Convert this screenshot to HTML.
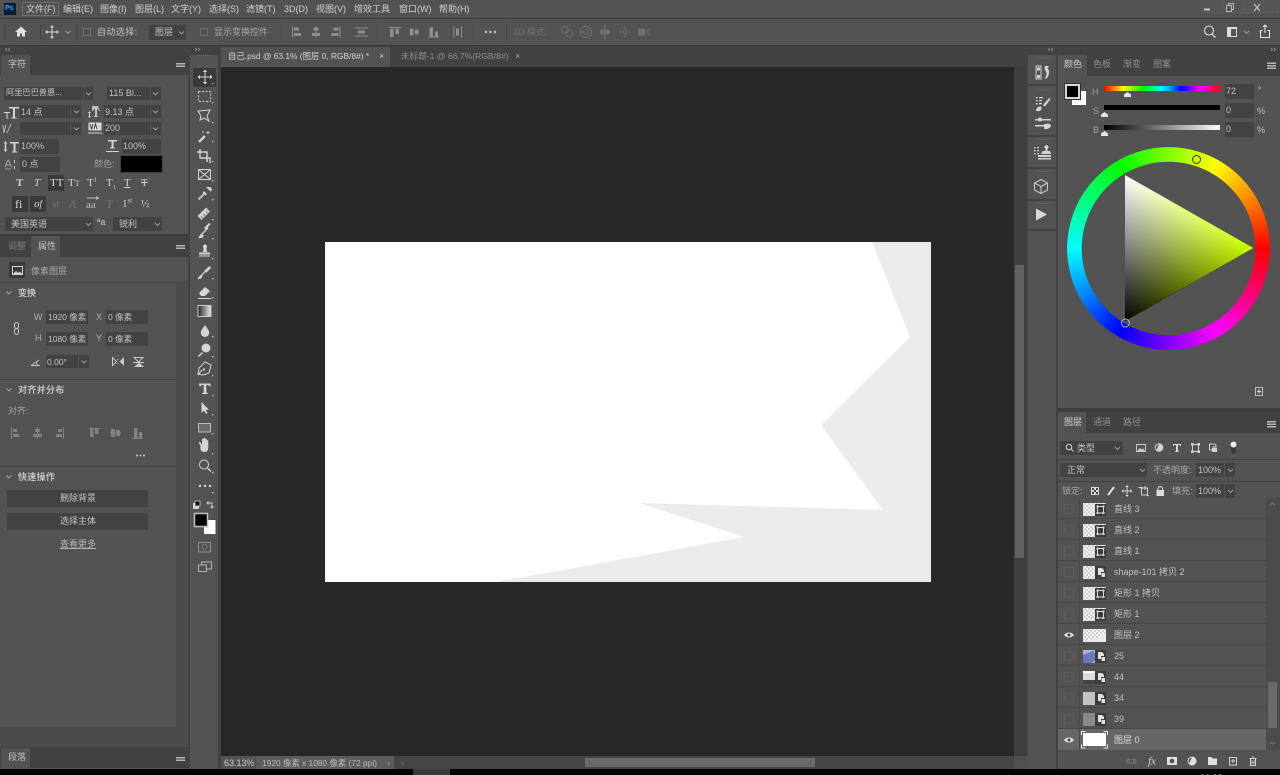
<!DOCTYPE html>
<html lang="zh"><head><meta charset="utf-8"><title>Photoshop</title>
<style>
html,body{margin:0;padding:0;background:#000}
#a{position:relative;width:1280px;height:775px;overflow:hidden;background:#535353;font-family:"Liberation Sans","Noto Sans CJK SC",sans-serif;filter:blur(.3px)}
#a div{position:absolute}
.t{white-space:nowrap;font-size:9px;line-height:12px;color:#c2c2c2}
.d{color:#8a8a8a}
.f{background:#434343}
.h{background:#424242}
.l{background:#3a3a3a}
.r{left:1058px;width:208px;height:20px;border-bottom:1px solid #474747}
.c{left:1064px;width:8px;height:8px;border:1px solid #5c5c5c}
.n{left:1114px;font-size:9px;line-height:12px;color:#c2c2c2;white-space:nowrap}
svg{position:absolute;left:0;top:0}
</style></head><body><div id="a">

<!-- bars -->
<div class="l" style="left:0;top:18px;width:1280px;height:1px"></div>
<div class="l" style="left:0;top:45px;width:1280px;height:1px"></div>
<div class="h" style="left:0;top:46px;width:1280px;height:9px"></div>

<!-- menu -->
<div style="left:4px;top:3px;width:12px;height:12px;background:#001e36"></div>
<div class="t" style="left:5px;top:3px;font-size:7px;font-weight:bold;color:#31a8ff">Ps</div>
<div style="left:22px;top:2px;width:35px;height:12px;border:1px solid #6e6e6e"></div>
<div class="t" style="left:26px;top:3px;color:#d0d0d0">文件(F)</div>
<div class="t" style="left:63px;top:3px;color:#d0d0d0">编辑(E)</div>
<div class="t" style="left:100px;top:3px;color:#d0d0d0">图像(I)</div>
<div class="t" style="left:135px;top:3px;color:#d0d0d0">图层(L)</div>
<div class="t" style="left:171px;top:3px;color:#d0d0d0">文字(Y)</div>
<div class="t" style="left:209px;top:3px;color:#d0d0d0">选择(S)</div>
<div class="t" style="left:246px;top:3px;color:#d0d0d0">滤镜(T)</div>
<div class="t" style="left:284px;top:3px;color:#d0d0d0">3D(D)</div>
<div class="t" style="left:316px;top:3px;color:#d0d0d0">视图(V)</div>
<div class="t" style="left:354px;top:3px;color:#d0d0d0">增效工具</div>
<div class="t" style="left:399px;top:3px;color:#d0d0d0">窗口(W)</div>
<div class="t" style="left:439px;top:3px;color:#d0d0d0">帮助(H)</div>
<div style="left:1201px;top:0;width:78px;height:13px;background:#565656;border:1px solid #5e5e5e;border-top:0;box-sizing:border-box"></div>

<!-- options -->
<div class="t" style="left:97px;top:26px;letter-spacing:.4px">自动选择:</div>
<div class="f" style="left:149px;top:25px;width:37px;height:15px"></div>
<div class="t" style="left:155px;top:26px">图层</div>
<div class="t" style="left:214px;top:26px;color:#a8a8a8">显示变换控件</div>
<div class="t d" style="left:513px;top:26px;color:#717171">3D 模式:</div>

<!-- left panel -->
<div class="h" style="left:0;top:54px;width:188px;height:21px"></div>
<div style="left:1px;top:55px;width:29px;height:20px;background:#535353"></div>
<div class="t" style="left:8px;top:58px">字符</div>

<div class="f" style="left:4px;top:87px;width:79px;height:13px"></div>
<div class="f" style="left:84px;top:87px;width:9px;height:13px"></div>
<div class="t" style="left:6px;top:87px;font-size:8.2px">阿里巴巴普惠...</div>
<div class="f" style="left:107px;top:87px;width:43px;height:13px"></div>
<div class="f" style="left:151px;top:87px;width:10px;height:13px"></div>
<div class="t" style="left:109px;top:87px">115 Bl...</div>

<div class="f" style="left:20px;top:105px;width:50px;height:13px"></div>
<div class="f" style="left:71px;top:105px;width:10px;height:13px"></div>
<div class="t" style="left:21px;top:106px">14 点</div>
<div class="f" style="left:104px;top:105px;width:46px;height:13px"></div>
<div class="f" style="left:151px;top:105px;width:10px;height:13px"></div>
<div class="t" style="left:105px;top:106px">9.13 点</div>

<div class="f" style="left:20px;top:122px;width:50px;height:13px"></div>
<div class="f" style="left:71px;top:122px;width:10px;height:13px"></div>
<div class="f" style="left:104px;top:122px;width:46px;height:13px"></div>
<div class="f" style="left:151px;top:122px;width:10px;height:13px"></div>
<div class="t" style="left:105px;top:122px">200</div>

<div class="f" style="left:20px;top:139px;width:39px;height:15px"></div>
<div class="t" style="left:21px;top:140px">100%</div>
<div class="f" style="left:122px;top:139px;width:39px;height:15px"></div>
<div class="t" style="left:123px;top:140px">100%</div>

<div class="f" style="left:20px;top:157px;width:40px;height:15px"></div>
<div class="t" style="left:22px;top:158px">0 点</div>
<div class="t" style="left:94px;top:158px;color:#9c9c9c">颜色:</div>
<div style="left:121px;top:156px;width:41px;height:16px;background:#000;outline:1px solid #424242"></div>

<div class="l" style="left:48px;top:175px;width:16px;height:16px"></div>
<div class="l" style="left:12px;top:196px;width:16px;height:16px"></div>
<div class="l" style="left:30px;top:196px;width:16px;height:16px"></div>
<div class="t" style="left:16px;top:177px;font:bold 11px/13px 'Liberation Serif';color:#cfcfcf">T</div>
<div class="t" style="left:34px;top:177px;font:italic 11px/13px 'Liberation Serif';color:#cfcfcf">T</div>
<div class="t" style="left:50px;top:177px;font:11px/13px 'Liberation Serif';color:#dcdcdc">TT</div>
<div class="t" style="left:68px;top:177px;font:11px/13px 'Liberation Serif';color:#cfcfcf">T<span style="font-size:8px">T</span></div>
<div class="t" style="left:87px;top:177px;font:11px/13px 'Liberation Serif';color:#cfcfcf">T<sup style="font-size:6px;line-height:0">1</sup></div>
<div class="t" style="left:106px;top:177px;font:11px/13px 'Liberation Serif';color:#cfcfcf">T<sub style="font-size:6px;line-height:0">1</sub></div>
<div class="t" style="left:124px;top:177px;font:11px/13px 'Liberation Serif';color:#cfcfcf;text-decoration:underline">T</div>
<div class="t" style="left:141px;top:177px;font:11px/13px 'Liberation Serif';color:#cfcfcf;text-decoration:line-through">T</div>

<div class="t" style="left:15px;top:197px;font:12px/14px 'Liberation Serif';color:#dcdcdc">fi</div>
<div class="t" style="left:34px;top:197px;font:italic 11px/14px 'Liberation Serif';color:#dcdcdc">o<span style="font-size:9px">f</span></div>
<div class="t" style="left:52px;top:197px;font:11px/14px 'Liberation Serif';color:#777">st</div>
<div class="t" style="left:69px;top:197px;font:italic 12px/14px 'Liberation Serif';color:#777">A</div>
<div class="t" style="left:86px;top:198px;font:11px/14px 'Liberation Serif';color:#bdbdbd">aa</div>
<div class="t" style="left:106px;top:197px;font:italic 12px/14px 'Liberation Serif';color:#777">T</div>
<div class="t" style="left:122px;top:197px;font:11px/14px 'Liberation Serif';color:#cfcfcf">1<sup style="font-size:7px;line-height:0">st</sup></div>
<div class="t" style="left:141px;top:197px;font:11px/14px 'Liberation Serif';color:#cfcfcf">½</div>

<div class="f" style="left:5px;top:217px;width:88px;height:14px"></div>
<div class="t" style="left:11px;top:218px">美国英语</div>
<div class="t" style="left:97px;top:216px;font-size:9px">ªa</div>
<div class="f" style="left:113px;top:217px;width:49px;height:14px"></div>
<div class="t" style="left:119px;top:218px">锐利</div>

<div class="l" style="left:0;top:234px;width:188px;height:2px"></div>
<div class="h" style="left:0;top:236px;width:188px;height:21px"></div>
<div style="left:31px;top:236px;width:29px;height:21px;background:#535353"></div>
<div class="t d" style="left:8px;top:240px;color:#7e7e7e">调整</div>
<div class="t" style="left:38px;top:240px">属性</div>
<div class="l" style="left:9px;top:262px;width:16px;height:16px"></div>
<div class="t" style="left:31px;top:265px;color:#a8a8a8">像素图层</div>

<div class="l" style="left:0;top:282px;width:188px;height:1px;background:#474747"></div>
<div style="left:176px;top:283px;width:12px;height:444px;background:#4b4b4b"></div>
<div class="t" style="left:18px;top:287px;font-weight:bold">变换</div>

<div class="t" style="left:34px;top:311px;color:#b0b0b0">W</div>
<div class="f" style="left:46px;top:310px;width:42px;height:14px"></div>
<div class="t" style="left:48px;top:311px;font-size:8.5px">1920 像素</div>
<div class="t" style="left:96px;top:311px;color:#b0b0b0">X</div>
<div class="f" style="left:106px;top:310px;width:42px;height:14px"></div>
<div class="t" style="left:108px;top:311px;font-size:8.5px">0 像素</div>
<div class="t" style="left:35px;top:332px;color:#b0b0b0">H</div>
<div class="f" style="left:46px;top:332px;width:42px;height:14px"></div>
<div class="t" style="left:48px;top:333px;font-size:8.5px">1080 像素</div>
<div class="t" style="left:96px;top:332px;color:#b0b0b0">Y</div>
<div class="f" style="left:106px;top:332px;width:42px;height:14px"></div>
<div class="t" style="left:108px;top:333px;font-size:8.5px">0 像素</div>
<div class="f" style="left:46px;top:355px;width:32px;height:13px"></div>
<div class="f" style="left:79px;top:355px;width:10px;height:13px"></div>
<div class="t" style="left:47px;top:356px;font-size:8.5px">0.00°</div>

<div style="left:0;top:379px;width:176px;height:1px;background:#444"></div>
<div class="t" style="left:18px;top:384px;font-weight:bold;letter-spacing:.3px">对齐并分布</div>
<div class="t" style="left:8px;top:405px;color:#a4a4a4">对齐:</div>
<div style="left:0;top:466px;width:176px;height:1px;background:#444"></div>
<div class="t" style="left:18px;top:471px;font-weight:bold;letter-spacing:.3px">快速操作</div>
<div class="f" style="left:7px;top:490px;width:141px;height:17px"></div>
<div class="t" style="left:60px;top:492px">删除背景</div>
<div class="f" style="left:7px;top:513px;width:141px;height:17px"></div>
<div class="t" style="left:60px;top:515px">选择主体</div>
<div class="t" style="left:60px;top:538px;text-decoration:underline;color:#b4b4b4">查看更多</div>

<div class="l" style="left:0;top:727px;width:188px;height:21px;background:#4b4b4b"></div>
<div class="h" style="left:0;top:747px;width:188px;height:21px"></div>
<div style="left:1px;top:748px;width:29px;height:20px;background:#535353"></div>
<div class="t" style="left:8px;top:751px">段落</div>

<!-- toolbar gutter -->
<div class="h" style="left:188px;top:46px;width:2px;height:723px"></div>
<div class="h" style="left:218px;top:46px;width:3px;height:723px"></div>
<div class="l" style="left:193px;top:68px;width:23px;height:19px"></div>

<!-- doc area -->
<div class="h" style="left:221px;top:46px;width:807px;height:21px"></div>
<div style="left:221px;top:47px;width:169px;height:20px;background:#535353"></div>
<div class="t" style="left:228px;top:50px;color:#d2d2d2;font-size:8.4px">自己.psd @ 63.1% (图层 0, RGB/8#) *</div>
<div class="t" style="left:379px;top:50px;color:#c8c8c8">×</div>
<div class="t" style="left:401px;top:50px;color:#8c8c8c;font-size:8.6px">未标题-1 @ 66.7%(RGB/8#)</div>
<div class="t" style="left:515px;top:50px;color:#b0b0b0">×</div>
<div style="left:221px;top:67px;width:793px;height:689px;background:#282828"></div>
<div style="left:325px;top:242px;width:606px;height:340px;background:#fff"></div>

<div style="left:1014px;top:67px;width:12px;height:689px;background:#3f3f3f"></div>
<div style="left:1015px;top:265px;width:9px;height:293px;background:#616161"></div>
<div class="h" style="left:1026px;top:46px;width:2px;height:723px"></div>

<!-- status -->
<div style="left:221px;top:756px;width:807px;height:13px;background:#505050"></div>
<div style="left:221px;top:756px;width:34px;height:13px;background:#535353"></div>
<div class="t" style="left:224px;top:757px;color:#c8c8c8">63.13%</div>
<div style="left:256px;top:756px;width:138px;height:13px;background:#5d5d5d"></div>
<div class="t" style="left:262px;top:757px;color:#b8b8b8;font-size:8.4px">1920 像素 x 1080 像素 (72 ppi)</div>
<div style="left:394px;top:756px;width:620px;height:13px;background:#454545"></div>
<div style="left:585px;top:758px;width:230px;height:9px;background:#6a6a6a"></div>
<div class="t" style="left:387px;top:757px;color:#a0a0a0">›</div>
<div class="t" style="left:401px;top:757px;color:#808080">‹</div>
<div style="left:0;top:769px;width:1280px;height:6px;background:#000"></div>
<div style="left:413px;top:769px;width:37px;height:6px;background:#3a3a3a"></div>
<div style="left:1200px;top:769px;width:24px;height:6px;overflow:hidden"><div class="t" style="left:0;top:3px;color:#fff;font-size:9px">10:28</div></div>

<!-- right strip -->
<div class="h" style="left:1056px;top:46px;width:2px;height:723px"></div>
<div class="l" style="left:1028px;top:84px;width:28px;height:2px;background:#444"></div>
<div class="l" style="left:1028px;top:135px;width:28px;height:2px;background:#444"></div>
<div class="l" style="left:1028px;top:167px;width:28px;height:2px;background:#444"></div>
<div class="l" style="left:1028px;top:199px;width:28px;height:2px;background:#444"></div>
<div class="l" style="left:1028px;top:229px;width:28px;height:2px;background:#444"></div>

<!-- colour panel -->
<div class="h" style="left:1058px;top:55px;width:222px;height:21px"></div>
<div style="left:1058px;top:55px;width:29px;height:21px;background:#535353"></div>
<div class="t" style="left:1064px;top:58px;color:#d0d0d0">颜色</div>
<div class="t" style="left:1093px;top:58px;color:#8e8e8e">色板</div>
<div class="t" style="left:1123px;top:58px;color:#8e8e8e">渐变</div>
<div class="t" style="left:1153px;top:58px;color:#8e8e8e">图案</div>
<div style="left:1072px;top:91px;width:14px;height:14px;background:#fff"></div>
<div style="left:1065px;top:84px;width:11px;height:11px;background:#000;border:2px solid #d8d8d8;outline:1px solid #333"></div>
<div class="t" style="left:1092px;top:86px;color:#a0a0a0">H</div>
<div class="t" style="left:1093px;top:105px;color:#a0a0a0">S</div>
<div class="t" style="left:1093px;top:124px;color:#a0a0a0">B</div>
<div style="left:1104px;top:86px;width:116px;height:5px;background:linear-gradient(90deg,#f00,#ff0 16.7%,#0f0 33.3%,#0ff 50%,#00f 66.7%,#f0f 83.3%,#f00)"></div>
<div style="left:1104px;top:105px;width:116px;height:5px;background:#000"></div>
<div style="left:1104px;top:125px;width:116px;height:5px;background:linear-gradient(90deg,#000,#fff)"></div>
<div class="f" style="left:1225px;top:84px;width:29px;height:15px"></div>
<div class="t" style="left:1226px;top:85px">72</div>
<div class="f" style="left:1225px;top:103px;width:29px;height:15px"></div>
<div class="t" style="left:1226px;top:104px">0</div>
<div class="f" style="left:1225px;top:122px;width:29px;height:15px"></div>
<div class="t" style="left:1226px;top:123px">0</div>
<div class="t" style="left:1258px;top:84px">°</div>
<div class="t" style="left:1257px;top:105px">%</div>
<div class="t" style="left:1257px;top:124px">%</div>
<div style="left:1066.5px;top:147px;width:203px;height:203px;border-radius:50%;background:conic-gradient(from 90deg,#f00,#f0f,#00f,#0ff,#0f0,#ff0,#f00);-webkit-mask:radial-gradient(circle,transparent 86.5px,#000 87px);mask:radial-gradient(circle,transparent 86.5px,#000 87px)"></div>

<!-- layers panel -->
<div class="h" style="left:1058px;top:408px;width:222px;height:4px;background:#3d3d3d"></div>
<div class="h" style="left:1058px;top:412px;width:222px;height:21px"></div>
<div style="left:1058px;top:412px;width:28px;height:21px;background:#535353"></div>
<div class="t" style="left:1064px;top:416px;color:#d0d0d0">图层</div>
<div class="t" style="left:1093px;top:416px;color:#8e8e8e">通道</div>
<div class="t" style="left:1123px;top:416px;color:#8e8e8e">路径</div>
<div class="f" style="left:1060px;top:441px;width:63px;height:14px"></div>
<div class="t" style="left:1077px;top:442px">类型</div>
<div style="left:1058px;top:459px;width:222px;height:1px;background:#444"></div>
<div class="f" style="left:1060px;top:463px;width:87px;height:14px"></div>
<div class="t" style="left:1067px;top:464px">正常</div>
<div class="t" style="left:1153px;top:464px;color:#a8a8a8">不透明度:</div>
<div class="f" style="left:1196px;top:463px;width:28px;height:14px"></div>
<div class="t" style="left:1198px;top:464px">100%</div>
<div class="f" style="left:1225px;top:463px;width:10px;height:14px"></div>
<div style="left:1058px;top:481px;width:222px;height:1px;background:#444"></div>
<div class="t" style="left:1062px;top:485px;color:#a8a8a8">锁定:</div>
<div class="t" style="left:1172px;top:485px;color:#a8a8a8">填充:</div>
<div class="f" style="left:1196px;top:484px;width:28px;height:14px"></div>
<div class="t" style="left:1198px;top:485px">100%</div>
<div class="f" style="left:1225px;top:484px;width:10px;height:14px"></div>

<div class="r" style="top:498px"></div><div class="r" style="top:519px"></div><div class="r" style="top:540px"></div><div class="r" style="top:561px"></div><div class="r" style="top:582px"></div><div class="r" style="top:603px"></div><div class="r" style="top:624px"></div><div class="r" style="top:645px"></div><div class="r" style="top:666px"></div><div class="r" style="top:687px"></div><div class="r" style="top:708px"></div>
<div style="left:1058px;top:729px;width:208px;height:21px;background:#666"></div>
<div style="left:1079px;top:498px;width:1px;height:252px;background:#4a4a4a"></div>

<div class="c" style="top:504px"></div><div class="c" style="top:525px"></div><div class="c" style="top:546px"></div><div class="c" style="top:567px"></div><div class="c" style="top:588px"></div><div class="c" style="top:609px"></div><div class="c" style="top:651px"></div><div class="c" style="top:672px"></div><div class="c" style="top:693px"></div><div class="c" style="top:714px"></div>

<div style="left:1266px;top:498px;width:14px;height:252px;background:#4c4c4c"></div>
<div style="left:1268px;top:682px;width:9px;height:46px;background:#6a6a6a"></div>

<div class="n" style="top:503px">直线 3</div>
<div class="n" style="top:524px">直线 2</div>
<div class="n" style="top:545px">直线 1</div>
<div class="n" style="top:566px">shape-101 拷贝 2</div>
<div class="n" style="top:587px">矩形 1 拷贝</div>
<div class="n" style="top:608px">矩形 1</div>
<div class="n" style="top:629px">图层 2</div>
<div class="n" style="top:650px">25</div>
<div class="n" style="top:671px">44</div>
<div class="n" style="top:692px">34</div>
<div class="n" style="top:713px">39</div>
<div class="n" style="top:734px;color:#d8d8d8">图层 0</div>

<svg width="1280" height="775" viewBox="0 0 1280 775" fill="none">
<defs>
<linearGradient id="tg"><stop offset="0" stop-color="#222"/><stop offset="1" stop-color="#eee"/></linearGradient>
<pattern id="ck" width="4" height="4" patternUnits="userSpaceOnUse"><rect width="4" height="4" fill="#f2f2f2"/><rect width="2" height="2" fill="#cfcfcf"/><rect x="2" y="2" width="2" height="2" fill="#cfcfcf"/></pattern>
<linearGradient id="gw" gradientUnits="userSpaceOnUse" x1="1125" y1="175" x2="1189" y2="284.5"><stop offset="0" stop-color="#fff"/><stop offset="1" stop-color="#000"/></linearGradient>
<linearGradient id="gh" gradientUnits="userSpaceOnUse" x1="1253" y1="248" x2="1125" y2="248"><stop offset="0" stop-color="#ccff00"/><stop offset="1" stop-color="#000"/></linearGradient>
<g id="lt"><rect x="1083" y="0" width="23" height="13" fill="url(#ck)"/><rect x="1095" y="1" width="11" height="12" fill="#3c3c3c"/><path d="M1097.5 3.5h6v6.5h-6z" stroke="#d8d8d8"/><path d="M1096.5 2.500h2v2h-2zM1102.500 2.500h2v2h-2zM1096.500 9h2v2h-2zM1102.500 9h2v2h-2z" fill="#d8d8d8"/></g>
<g id="so"><rect x="1095" y="0" width="11" height="13" fill="#3c3c3c"/><path d="M1098 2h4l2 2v2h-3v3h-3z" fill="#e0e0e0"/><rect x="1101.500" y="7" width="3.500" height="4" fill="#e0e0e0"/></g>
<g id="ey"><path d="M1064 0c3-3.400 7-3.400 10 0c-3 3.400-7 3.400-10 0z" fill="#e2e2e2"/><circle cx="1069" cy="0" r="1.500" fill="#444"/></g>
<path id="ch" d="M0 0l2.500 2.500L5 0" stroke="#a0a0a0" stroke-width=".9"/>
<path id="cr" d="M0 0h2l-2 2z" fill="#b5b5b5"/>
<path id="th" d="M0 5V2.500L3.500 0 7 2.500V5z" fill="#e4e4e4"/>
</defs>

<!-- canvas shape -->
<polygon points="872,242 931,242 931,582 497,582 744,537 640,503 883,510 821,425 910,337" fill="#ebebeb"/>

<!-- window buttons -->
<path d="M1204 9.500h6" stroke="#c8c8c8" stroke-width="2"/>
<path d="M1226.500 5.500v6h5v-6zM1228.500 5.500v-2h5v6h-2" stroke="#b8b8b8"/>
<path d="M1254 4l6 7M1260 4l-6 7" stroke="#c8c8c8" stroke-width="1.100"/>
<path d="M1222.500 0v13M1243.500 0v13" stroke="#5e5e5e"/>

<!-- options icons -->
<path d="M40.500 23v18M76.500 23v18M281.500 23v18M377.500 23v18M473.500 23v18M506.500 23v18" stroke="#484848"/>
<path d="M4.500 23v18" stroke="#484848"/>
<path d="M15 32l6-5.500 6 5.500h-2v4.500h-3v-3h-2v3h-3V32z" fill="#e0e0e0"/>
<g stroke="#d0d0d0"><path d="M52 26.500v11M46.500 32h11"/></g>
<path d="M52 25l2 2.500h-4zM52 39l-2-2.500h4zM45 32l2.500-2v4zM59 32l-2.500 2v-4z" fill="#d8d8d8"/>
<use href="#ch" x="65.500" y="31"/>
<rect x="83.500" y="28.500" width="7" height="7" stroke="#6e6e6e"/>
<use href="#ch" x="179" y="31.500"/>
<rect x="200.500" y="28.500" width="7" height="7" stroke="#6e6e6e"/>
<g fill="#8f8f8f">
<path d="M292 26.500h1v11h-1zM294 27.500h5v3h-5zM294 33h7v3h-7z"/>
<path d="M315.500 26.500h1v11h-1zM313.500 27.500h5v3h-5zM312 33h8v3h-8z"/>
<path d="M339.500 26.500h1v11h-1zM333.500 27.500h5v3h-5zM331.500 33h7v3h-7z"/>
<path d="M355 27.500h13v1h-13zM355 35.500h13v1h-13zM358 30.500h7v3h-7z"/>
<path d="M389 27h12v1.200h-12zM390 29h3.500v8h-3.500zM395.500 29h3.500v5h-3.500z"/>
<path d="M409 31.500h10v1h-10zM410 28.500h3.500v7h-3.500zM415 29.500h3.500v5h-3.500z"/>
<path d="M428 36.500h11v1h-11zM429.500 27.500h3.500v9h-3.500zM435 31.500h3v5h-3z"/>
<path d="M453.500 26v12h1V26zM461 26v12h1V26zM456 28.500h3v7h-3z"/>
</g>
<g fill="#d0d0d0"><circle cx="486" cy="32" r="1.200"/><circle cx="490.500" cy="32" r="1.200"/><circle cx="495" cy="32" r="1.200"/></g>
<g stroke="#6f6f6f" fill="none">
<circle cx="565" cy="30" r="3.500"/><circle cx="569" cy="33" r="3.500"/>
<circle cx="586" cy="32" r="5.500"/><circle cx="586" cy="32" r="2.500"/>
<path d="M605 26v12M600 32h10"/><circle cx="625" cy="32" r="2"/><path d="M625 26v3M625 35v3M619 32h3M628 32h3"/>
</g>
<path d="M605 25l2 2.500h-4zM605 39l-2-2.500h4zM600 30l3 2-3 2zM610 30l-3 2 3 2z" fill="#6f6f6f"/>
<rect x="601" y="29.500" width="8" height="5" fill="#6f6f6f"/>
<rect x="638" y="28.500" width="7" height="7" fill="#6f6f6f"/><path d="M646 32l4-3M646 32l4 3" stroke="#6f6f6f"/>

<!-- right options -->
<circle cx="1209" cy="30.500" r="4.500" stroke="#dcdcdc" stroke-width="1.100"/><path d="M1212 34l3.500 3.500" stroke="#dcdcdc" stroke-width="1.300"/>
<rect x="1227.500" y="27.500" width="9" height="9" stroke="#dcdcdc"/><rect x="1228" y="28" width="3" height="8" fill="#dcdcdc"/><rect x="1228" y="27" width="8" height="2" fill="#dcdcdc"/>
<use href="#ch" x="1244" y="31"/>
<path d="M1262.500 30.500h-2v7h9v-7h-2M1265 33v-8M1263 27l2-2 2 2" stroke="#e2e2e2" stroke-width="1.100"/>

<!-- panel collapse arrows -->
<g stroke="#9a9a9a" stroke-width=".8">
<path d="M7 48l-1.500 1.500L7 51M10 48l-1.500 1.500L10 51M195 48l1.500 1.500L195 51M198 48l1.500 1.500L198 51"/>
<path d="M1050 48l-1.500 1.500L1050 51M1053 48l-1.500 1.500L1053 51M1271 48l1.500 1.500L1271 51M1274 48l1.500 1.500L1274 51"/>
</g>

<!-- panel menus -->
<g fill="#b5b5b5">
<path d="M176 63h9v1.500h-9zM176 65.500h9V67h-9zM176 245h9v1.500h-9zM176 247.500h9V249h-9zM176 757h9v1.500h-9zM176 759.500h9V761h-9z"/>
<path d="M1267 62.500h9V64h-9zM1267 65h9v1.500h-9zM1267 67.500h9V69h-9zM1267 421h9v1.500h-9zM1267 423.500h9V425h-9zM1267 426h9v1.500h-9z"/>
</g>

<!-- char dropdown chevrons -->
<use href="#ch" x="86" y="92.500"/><use href="#ch" x="153" y="92.500"/>
<use href="#ch" x="74" y="110.500"/><use href="#ch" x="153" y="110.500"/>
<use href="#ch" x="74" y="127.500"/><use href="#ch" x="153" y="127.500"/>
<use href="#ch" x="86" y="223"/><use href="#ch" x="155" y="223"/>
<use href="#ch" x="81.500" y="360.500"/>
<use href="#ch" x="1115" y="447"/><use href="#ch" x="1140" y="469"/>
<use href="#ch" x="1228" y="469"/><use href="#ch" x="1228" y="490"/>

<!-- char icons -->
<g fill="#d4d4d4">
<path d="M9 107h10v1.500h-4v9h1.500v1h-5v-1H13v-9H9z"/><path d="M4 112h6v1h-2.500v5h1v.5H6v-.5h.5v-5H4z"/>
<path d="M92 106h6l2 5h-1l-1-2h-1v7h1v1h-4v-1h1v-7h-1l-1 2h-1z" opacity=".85"/><path d="M88 113l1.500-2 1.500 2h-1v3h1l-1.500 2-1.500-2h1v-3z"/>
<path d="M10 142h9v1.500h-3.500v8h1.500v1h-5v-1h1.500v-8H10zM5.500 141l1.800 2.500H6.200v6h1.100l-1.800 2.500-1.800-2.500h1.100v-6H3.700z"/>
<path d="M108 140h9v1.500h-3.500v6h1.500v1h-5v-1h1.500v-6H108z"/><path d="M106 151h13v1h-13z"/>
</g>
<path d="M4 133l-1-8M4 133l2-8M7 133l4-9" stroke="#c8c8c8" stroke-width=".8"/>
<rect x="88.500" y="122.500" width="13" height="8" fill="#d8d8d8"/><path d="M90 124l1.500 5 1.500-5M94 129l1.500-5 1.500 5" stroke="#434343"/><path d="M88 133h14" stroke="#d0d0d0"/>
<path d="M5 167l3-7h.5l3 7M6 165h5M5 169h6" stroke="#b8b8b8" stroke-width=".8"/><path d="M14 160h1v3h-1zM14 166h1v3h-1z" fill="#c0c0c0"/>
<path d="M87 198h12M96 196.500l2.500 1.500-2.500 1.500" stroke="#bdbdbd"/>

<!-- pixel layer icon / transform -->
<rect x="12.500" y="266.500" width="10" height="8" stroke="#d4d4d4"/><path d="M13 274l3-3 2 2 1.500-1.500 3 2.500v.5z" fill="#d4d4d4"/>
<g stroke="#a8a8a8" stroke-width=".9" fill="none">
<path d="M6.500 291.500l2.500 2.500 2.500-2.500M6.500 388.500l2.500 2.500 2.500-2.500M6.500 475.500l2.500 2.500 2.500-2.500"/>
</g>
<rect x="14.500" y="322.500" width="4" height="6" rx="2" stroke="#c8c8c8"/><rect x="14.500" y="328.500" width="4" height="6" rx="2" stroke="#c8c8c8"/>
<path d="M31 365.500h9M31 365.500l8-5.500M36 362l1.500 3.500" stroke="#c0c0c0"/>
<path d="M112.500 357.500v8l4-4z" stroke="#c8c8c8" fill="none"/><path d="M124 357v9l-4.500-4.500z" fill="#c8c8c8"/><path d="M118 355.500v1M118 359v1M118 363v1" stroke="#c8c8c8"/>
<path d="M134 357.500h9l-4.500 4.500z" stroke="#c8c8c8"/><path d="M134 367h10l-5-4.500z" fill="#c8c8c8"/><path d="M133 362.500h11" stroke="#c8c8c8"/>

<g fill="#828282">
<path d="M11 427v12h1v-12zM13 429h4v3h-4zM13 434h6v3h-6z"/>
<path d="M37 427h1v12h-1zM35 429h5v3h-5zM33 434h9v3h-9z"/>
<path d="M64 427v12h-1v-12zM58 429h4v3h-4zM56 434h6v3h-6z"/>
<path d="M89 428h11v1h-11zM90 429h3.500v8h-3.500zM95 429h3.500v5h-3.500z"/>
<path d="M110 432.500h11v1h-11zM111 429h4v8h-4zM116 430h4v6h-4z"/>
<path d="M132 438h11v1h-11zM134 428h3.500v10h-3.500zM139 432h3v6h-3z"/>
</g>
<g fill="#c8c8c8"><circle cx="137" cy="455.500" r="1"/><circle cx="140.500" cy="455.500" r="1"/><circle cx="144" cy="455.500" r="1"/></g>

<!-- toolbar grips -->
<path d="M197 55.500h15M1035 57.500h15M1035 89.500h15M1035 139.500h15M1035 171.500h15M1035 203.500h15" stroke="#6c6c6c" stroke-dasharray="1 1"/>

<!-- tools -->
<g stroke="#d4d4d4" fill="none" stroke-width="1">
<path d="M205 71v12M199 77h12"/>
<rect x="198.500" y="91.500" width="12" height="10" stroke-dasharray="2 1.500" stroke="#c8c8c8"/>
<path d="M198 111l12-1-3 6 2 5-5-3-4 2 1-4z"/>
<path d="M199 142l6-6" stroke-width="2.400"/><path d="M208 131v3M206.500 132.500h3M203 131v2" stroke-width=".9"/>
<path d="M200 149v9h10v5M197 152h10v10" stroke-width="1.400"/>
<rect x="198.500" y="169.500" width="12" height="10"/><path d="M198.500 169.500l12 10M210.500 169.500l-12 10"/>
<path d="M198.500 199.500l6-6" stroke-width="2" stroke="#bdbdbd"/>
<path d="M199.500 218l8.500-8.500" stroke-width="5.500" stroke="#d0d0d0"/>
<path d="M201 216.500l1.500 1.500M203.500 214l1.500 1.500M206 211.500l1.500 1.500" stroke="#535353" stroke-width=".8"/>
<path d="M199 238l2-3 7-7" stroke-width="1.300"/>
<path d="M198 279l3-3 8-9" stroke-width="1.300"/>
<path d="M205 362l6 3-2 8-6 2-5-1 1-6zM198 375l4-5" stroke-width="1.100" stroke="#cfcfcf"/>
<circle cx="203.800" cy="369.500" r="1.200" fill="#cfcfcf" stroke="none"/>
<circle cx="204" cy="464.500" r="4.500"/><path d="M207.500 468l3.500 3.500" stroke-width="1.300"/>
<rect x="198.500" y="423.500" width="12" height="8.500" stroke="#bbb" fill="#6c6c6c"/>
<rect x="198.500" y="542.500" width="12" height="9.500" stroke="#909090"/><circle cx="204.500" cy="547" r="2.500" stroke="#909090" stroke-dasharray="1 1"/>
<rect x="201.500" y="562" width="10" height="7" stroke="#b0b0b0"/><rect x="198.500" y="565" width="8" height="6.500" stroke="#b0b0b0" fill="#535353"/>
</g>
<g fill="#d4d4d4">
<path d="M205 69.500l2.200 2.500h-4.400zM205 84.500l-2.200-2.500h4.400zM197.500 77l2.500-2.200v4.400zM212.500 77l-2.500 2.200v-4.400z"/>
<path d="M204 191l3 3-1.500 1.500-3-3z"/><path d="M206 187l4.500 4.500 1-1c1-1.500-.5-3.500-2-3.500z"/>
<path d="M204 228l5-5 1.500 1-4.500 6zM199 238c.5-3 2-4 4-3.500 1 1 .5 3-1.500 3.500z"/>
<path d="M203.500 247h3v3.500l1 1.500h-5l1-1.500zM199 252.500h11v2h-11zM199 255.500h11v1h-11z"/><circle cx="205" cy="246.500" r="2"/>
<path d="M205 270l5-4 1 2-5 5zM198 278l2.500-3 2 1.500-2 2.500z"/>
<path d="M199 293l6-6 5 4-5 5h-4zM198 298h13v1h-13z"/>
<path d="M205 325l4 6c1 4-2 6-4 6s-5-2-4-6z"/>
<circle cx="206" cy="348" r="4.500"/><path d="M202 352l-4 4 1 1 4-4z"/>
<path d="M199 383.500h11.500v3h-1c-.3-1-.8-1.500-2-1.500h-1.200v7.500l1.500.5v1h-5.600v-1l1.500-.5V385h-1.200c-1.200 0-1.700.5-2 1.500h-1z"/>
<path d="M201.500 402l0 11 2.500-2.500 2 3.500 1.500-.7-1.800-3.500h3.300z"/>
<path d="M201 447l-2-4c-.5-1 1-1.500 1.500-.5l1.500 2.500v-5.500c0-1 1.500-1 1.500 0v-1c0-1 1.700-1 1.700 0v1c0-1 1.600-1 1.600 0v1.500c0-1 1.500-1 1.500 0v6c0 3-1 5-4 5s-3.500-2-4.300-4.500z"/>
<circle cx="200" cy="486" r="1.200"/><circle cx="205" cy="486" r="1.200"/><circle cx="210" cy="486" r="1.200"/>
<rect x="193" y="503" width="6" height="6"/>
</g>
<rect x="195" y="501" width="5" height="5" fill="#111" stroke="#ccc" stroke-width=".8"/>
<path d="M207 503h5v5M207 503l1.500-1.500M207 503l1.500 1.500M212 508l-1.500-1.500M212 508l1.500-1.500" stroke="#d4d4d4" stroke-width=".9"/>
<rect x="204" y="520" width="11.500" height="14" fill="#fff"/>
<rect x="194.500" y="513.500" width="13" height="13" fill="#000" stroke="#bdbdbd" stroke-width="1.600"/>
<g><use href="#cr" x="212" y="83"/><use href="#cr" x="212" y="102"/><use href="#cr" x="212" y="122"/><use href="#cr" x="212" y="141"/><use href="#cr" x="212" y="161"/><use href="#cr" x="212" y="180"/><use href="#cr" x="212" y="199"/><use href="#cr" x="212" y="219"/><use href="#cr" x="212" y="238"/><use href="#cr" x="212" y="258"/><use href="#cr" x="212" y="278"/><use href="#cr" x="212" y="297"/><use href="#cr" x="212" y="336"/><use href="#cr" x="212" y="356"/><use href="#cr" x="212" y="375"/><use href="#cr" x="212" y="395"/><use href="#cr" x="212" y="414"/><use href="#cr" x="212" y="433"/><use href="#cr" x="212" y="453"/><use href="#cr" x="212" y="472"/><use href="#cr" x="212" y="492"/></g>
<rect x="198" y="305.500" width="13" height="11" fill="url(#tg)" stroke="#c8c8c8"/>

<!-- right strip icons -->
<g fill="#d4d4d4">
<rect x="1036" y="66" width="5" height="13" stroke="#d4d4d4" fill="none"/><rect x="1037" y="67.500" width="3" height="3"/><rect x="1037" y="75" width="3" height="3"/>
<path d="M1045 66h4l-1 2h-1c3 2 3 7-1 11l-1-1c2-3 2-6 0-8l-.5 1z"/>
<path d="M1036 97h1.500v1.500H1036zM1036 100h1.500v1.500H1036zM1036 103h1.500v1.500H1036zM1039 97h4v1.200h-4zM1039 100h3v1.200h-3zM1039 103h3v1.200h-3z"/>
<path d="M1043 105l6-7 1.500 1-5.500 7.500zM1036 111c0-3 3-5 5-4.500 1 1 .5 4-1.500 4.500z"/>
<path d="M1035 119h16v1.500h-16zM1035 125h16v1.500h-16z"/><circle cx="1040" cy="119.500" r="2"/><path d="M1044 124h4v5h-4z"/><circle cx="1048" cy="126" r="2.500"/>
<path d="M1034 147h1.500v1.500H1034zM1034 150h1.500v1.500H1034zM1034 153h1.500v1.500H1034zM1037 147h2v1.200h-2zM1037 150h2v1.200h-2zM1037 153h2v1.200h-2z"/>
<path d="M1042.500 151h3v-2.500h-.5a2 2 0 1 1 3 0h-.5v2.500h2.500l1 3h-10z"/><path d="M1038 155h13v2h-13zM1038 158h13v1.500h-13z"/>
<path d="M1036 208.500l11 6-11 6z" fill="#d8d8d8"/>
</g>
<path d="M1041 179.500l6.500 3.500v7l-6.500 3.500-6.500-3.500v-7zM1034.500 183l6.500 3.500 6.500-3.500M1041 186.500v7" stroke="#c8c8c8"/>

<!-- colour sliders thumbs -->
<use href="#th" x="1124" y="92"/><use href="#th" x="1101" y="112"/><use href="#th" x="1101" y="131"/>
<!-- triangle -->
<g style="isolation:isolate">
<polygon points="1125,175 1253.500,248 1125,321" fill="#000"/>
<polygon points="1125,175 1253.500,248 1125,321" fill="url(#gw)" style="mix-blend-mode:plus-lighter"/>
<polygon points="1125,175 1253.500,248 1125,321" fill="url(#gh)" style="mix-blend-mode:plus-lighter"/>
</g>
<circle cx="1196.500" cy="159.500" r="4" stroke="#333" stroke-width="1"/>
<circle cx="1125.500" cy="323" r="4" stroke="#b8b8b8" stroke-width="1"/>
<rect x="1255.500" y="387.500" width="7" height="8" stroke="#bdbdbd"/><path d="M1257 391.500h4M1259 389.500v4" stroke="#dadada"/>

<!-- layers filter icons -->
<circle cx="1069" cy="447" r="2.800" stroke="#d0d0d0" stroke-width="1"/><path d="M1071 449l2.500 2.500" stroke="#d0d0d0"/>
<rect x="1136.500" y="444.500" width="9" height="7" stroke="#c8c8c8"/><path d="M1137 451l3-3 2 1.500 1-1 2 2.500z" fill="#c8c8c8"/>
<circle cx="1159" cy="447.500" r="3.800" stroke="#d4d4d4"/><path d="M1159 443.700a3.800 3.800 0 0 1 0 7.600l-2.500-1z" fill="#d4d4d4"/>
<path d="M1173 444h8v2h-.8l-.4-1H1178v6l1 .4v.6h-4v-.6l1-.4v-6h-1.800l-.4 1H1173z" fill="#d4d4d4"/>
<rect x="1192.500" y="444.500" width="6" height="7" stroke="#d4d4d4"/><path d="M1191 443h2.500v2.500H1191zM1197.500 443h2.500v2.500h-2.500zM1191 450.500h2.500v2.500H1191zM1197.500 450.500h2.500v2.500h-2.500z" fill="#d4d4d4"/>
<path d="M1209.500 444h5l1.500 1.500V447h-3v3h-3.500z" stroke="#d4d4d4"/><rect x="1212" y="448" width="5" height="4" fill="#d4d4d4"/>
<rect x="1231" y="441" width="5" height="13" rx="2.500" fill="#3c3c3c"/><circle cx="1233.500" cy="444.500" r="3" fill="#efefef"/>

<!-- lock -->
<rect x="1091" y="487" width="8" height="8" fill="#d8d8d8"/><path d="M1092 488h2v2h-2zM1096 488h2v2h-2zM1094 490h2v2h-2zM1092 492h2v2h-2zM1096 492h2v2h-2z" fill="#444"/>
<path d="M1108 495l6-8" stroke="#dcdcdc" stroke-width="2"/>
<path d="M1127 486v10M1122 491h10" stroke="#d4d4d4"/><path d="M1127 485l1.800 2h-3.600zM1127 497l-1.800-2h3.600zM1121.500 491l2-1.800v3.600zM1132.500 491l-2 1.800v-3.600z" fill="#d4d4d4"/>
<path d="M1140 488h7.500v7h-6v-7M1138.500 487.500h4M1145 486v4M1147 495l2 1" stroke="#d4d4d4"/>
<rect x="1156.500" y="490" width="7.500" height="6" fill="#dcdcdc"/><path d="M1158 490v-1.500a2.300 2.300 0 0 1 4.500 0V490" stroke="#dcdcdc"/>

<!-- eye icons -->
<use href="#ey" x="0" y="635"/><use href="#ey" x="0" y="740"/>

<!-- thumbnails -->
<use href="#lt" y="503"/><use href="#lt" y="524"/><use href="#lt" y="545"/>
<rect x="1083" y="566" width="23" height="13" fill="url(#ck)"/><use href="#so" y="566"/>
<use href="#lt" y="587"/><use href="#lt" y="608"/>
<rect x="1083" y="629" width="23" height="13" fill="url(#ck)"/><path d="M1083 642h23v-10l-4 3-3 2.500-6 1.500-10 1z" fill="#e8e8e8"/>
<rect x="1083" y="650" width="23" height="13" fill="#aab4dc"/><path d="M1083 655l10-4 6 7-8 5h-8z" fill="#6a78c0"/><use href="#so" y="650"/>
<rect x="1083" y="671" width="23" height="13" fill="#dcdcdc"/><rect x="1083" y="680" width="23" height="4" fill="#444"/><rect x="1083" y="671" width="23" height="2" fill="#fff"/><use href="#so" y="671"/>
<rect x="1083" y="692" width="23" height="13" fill="#c4c4c4"/><use href="#so" y="692"/>
<rect x="1083" y="713" width="23" height="13" fill="#8a8a8a"/><use href="#so" y="713"/>
<rect x="1083" y="733" width="23" height="13" fill="#fff"/>
<path d="M1081.500 735v-3.500h4M1103.500 731.500h4v3.500M1107.500 744.500v3.500h-4M1085.500 748h-4v-3.500" stroke="#e8e8e8"/>
<path d="M1270 505l2.500-2 2.500 2M1270 742l2.500 2 2.500-2" stroke="#7c7c7c" stroke-width=".9"/>

<!-- layers bottom toolbar -->
<path d="M1128 759.500h2a2 2 0 0 0 0 3.500h-2a2 2 0 0 1 0-3.500zM1133 759.500h2a2 2 0 0 1 0 3.500h-2a2 2 0 0 0 0-3.500z" stroke="#777"/>
<text x="1148" y="764.500" fill="#d4d4d4" font-family="Liberation Serif" font-style="italic" font-size="11">fx</text>
<rect x="1167" y="757" width="10" height="8" fill="#e0e0e0"/><circle cx="1172" cy="761" r="2.300" fill="#535353"/>
<circle cx="1192" cy="761" r="4" stroke="#e0e0e0"/><path d="M1192 757a4 4 0 0 1 0 8l-3-1.300z" fill="#e0e0e0"/>
<path d="M1208 757h3.500l1 1.500h4.500v6.500h-9z" fill="#e0e0e0"/>
<rect x="1229.500" y="757.500" width="7" height="7.500" stroke="#d4d4d4"/><path d="M1231 761h4M1233 759v4" stroke="#d4d4d4"/>
<path d="M1249.500 758.500h7M1250.500 759v6.500h5V759M1252 757h2M1252 760.500v3.500M1254 760.500v3.500" stroke="#d4d4d4"/>
</svg>
</div></body></html>
